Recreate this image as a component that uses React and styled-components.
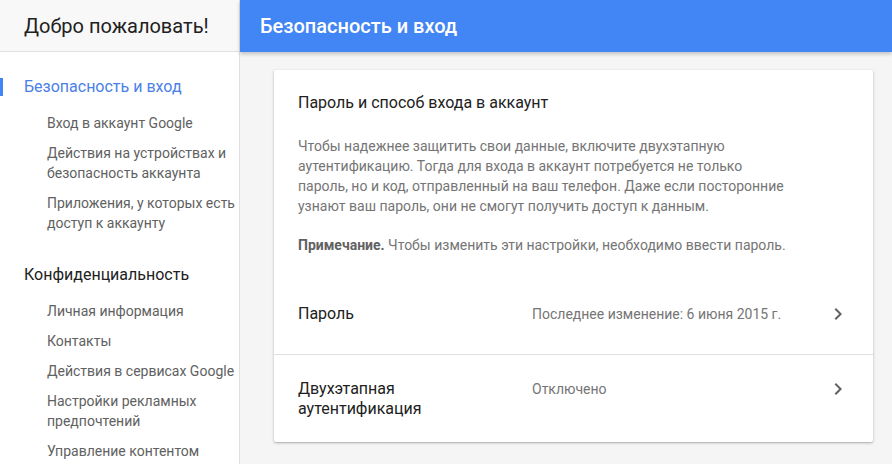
import React from "react";
import styled, { createGlobalStyle } from "styled-components";

const Global = createGlobalStyle`
  html, body { margin: 0; padding: 0; }
  body {
    font-family: Roboto, "Noto Sans", Arial, sans-serif;
    background: #f5f5f5;
    -webkit-font-smoothing: antialiased;
  }
  * { box-sizing: border-box; }
`;

const Page = styled.div`
  display: flex;
  width: 892px;
  height: 464px;
  overflow: hidden;
`;

const Sidebar = styled.aside`
  width: 240px;
  flex: none;
  background: #fff;
  border-right: 1px solid #e0e0e0;
  display: flex;
  flex-direction: column;
`;

const SideHeader = styled.div`
  height: 52px;
  flex: none;
  display: flex;
  align-items: center;
  padding-left: 24px;
  background: #f8f8f8;
  border-bottom: 1px solid #e0e0e0;
  font-size: 20px;
  color: #212121;
`;

const Nav = styled.nav`
  display: flex;
  flex-direction: column;
  gap: 30px;
  padding-top: 23px;
`;

const Group = styled.div`
  display: flex;
  flex-direction: column;
`;

const GroupTitle = styled.div`
  position: relative;
  padding-left: 24px;
  font-size: 16px;
  line-height: 24px;
  margin-bottom: 14px;
  color: ${(p) => (p.$active ? "#4a80e8" : "#212121")};
  &::before {
    content: "";
    display: ${(p) => (p.$active ? "block" : "none")};
    position: absolute;
    left: 0;
    top: 3px;
    width: 3px;
    height: 18px;
    background: #4285f4;
  }
`;

const Items = styled.div`
  display: flex;
  flex-direction: column;
  gap: 10px;
`;

const Item = styled.div`
  padding-left: 47px;
  padding-right: 4px;
  font-size: 14px;
  line-height: 20px;
  color: #616161;
`;

const Main = styled.main`
  flex: 1;
  display: flex;
  flex-direction: column;
  background: #f5f5f5;
`;

const TopBar = styled.header`
  height: 52px;
  flex: none;
  background: #4285f4;
  display: flex;
  align-items: center;
  padding-left: 20px;
  color: #fff;
  font-size: 20px;
  font-weight: 500;
  box-shadow: 0 2px 4px rgba(0, 0, 0, 0.22);
  position: relative;
  z-index: 1;
`;

const Content = styled.div`
  padding: 18px 19px 0 34px;
`;

const Card = styled.section`
  background: #fff;
  box-shadow: 0 1px 3px rgba(0, 0, 0, 0.25), 0 1px 1px rgba(0, 0, 0, 0.08);
  border-radius: 2px;
`;

const CardIntro = styled.div`
  padding: 21px 24px 25px 24px;
`;

const CardTitle = styled.h2`
  margin: 0 0 21px;
  font-size: 16px;
  font-weight: 400;
  line-height: 24px;
  color: #212121;
`;

const Para = styled.p`
  margin: 0 0 19px;
  font-size: 14px;
  line-height: 20px;
  color: #757575;
  white-space: nowrap;
  &:last-child { margin-bottom: 0; }
  b { color: #616161; font-weight: 700; }
`;

const Row = styled.div`
  display: flex;
  align-items: flex-start;
  padding: 24px 23px 28px 24px;
  border-top: ${(p) => (p.$divider ? "1px solid #e0e0e0" : "none")};
  &:last-child { padding-bottom: 23px; }
`;

const RowLabel = styled.div`
  width: 234px;
  flex: none;
  font-size: 16px;
  line-height: 20px;
  color: #212121;
`;

const RowValue = styled.div`
  flex: 1;
  font-size: 14px;
  line-height: 20px;
  color: #757575;
`;

const Chevron = styled.svg`
  flex: none;
  width: 24px;
  height: 24px;
  margin-top: -2px;
  fill: #616161;
`;

const ChevronIcon = () => (
  <Chevron viewBox="0 0 24 24">
    <path d="M10 6L8.59 7.41 13.17 12l-4.58 4.59L10 18l6-6z" />
  </Chevron>
);

const groups = [
  {
    title: "Безопасность и вход",
    active: true,
    items: [
      ["Вход в аккаунт Google"],
      ["Действия на устройствах и", "безопасность аккаунта"],
      ["Приложения, у которых есть", "доступ к аккаунту"],
    ],
  },
  {
    title: "Конфиденциальность",
    items: [
      ["Личная информация"],
      ["Контакты"],
      ["Действия в сервисах Google"],
      ["Настройки рекламных", "предпочтений"],
      ["Управление контентом"],
    ],
  },
];

const Lines = ({ lines }) =>
  lines.map((l, i) => (
    <React.Fragment key={i}>
      {i > 0 && <br />}
      {l}
    </React.Fragment>
  ));

export default function App() {
  return (
    <>
      <Global />
      <Page>
        <Sidebar>
          <SideHeader>Добро пожаловать!</SideHeader>
          <Nav>
            {groups.map((g) => (
              <Group key={g.title}>
                <GroupTitle $active={g.active}>{g.title}</GroupTitle>
                <Items>
                  {g.items.map((it) => (
                    <Item key={it[0]}>
                      <Lines lines={it} />
                    </Item>
                  ))}
                </Items>
              </Group>
            ))}
          </Nav>
        </Sidebar>
        <Main>
          <TopBar>Безопасность и вход</TopBar>
          <Content>
            <Card>
              <CardIntro>
                <CardTitle>Пароль и способ входа в аккаунт</CardTitle>
                <Para>
                  Чтобы надежнее защитить свои данные, включите двухэтапную
                  <br />
                  аутентификацию. Тогда для входа в аккаунт потребуется не только
                  <br />
                  пароль, но и код, отправленный на ваш телефон. Даже если посторонние
                  <br />
                  узнают ваш пароль, они не смогут получить доступ к данным.
                </Para>
                <Para>
                  <b>Примечание.</b> Чтобы изменить эти настройки, необходимо ввести пароль.
                </Para>
              </CardIntro>
              <Row>
                <RowLabel>Пароль</RowLabel>
                <RowValue>Последнее изменение: 6 июня 2015 г.</RowValue>
                <ChevronIcon />
              </Row>
              <Row $divider>
                <RowLabel>
                  Двухэтапная
                  <br />
                  аутентификация
                </RowLabel>
                <RowValue>Отключено</RowValue>
                <ChevronIcon />
              </Row>
            </Card>
          </Content>
        </Main>
      </Page>
    </>
  );
}
